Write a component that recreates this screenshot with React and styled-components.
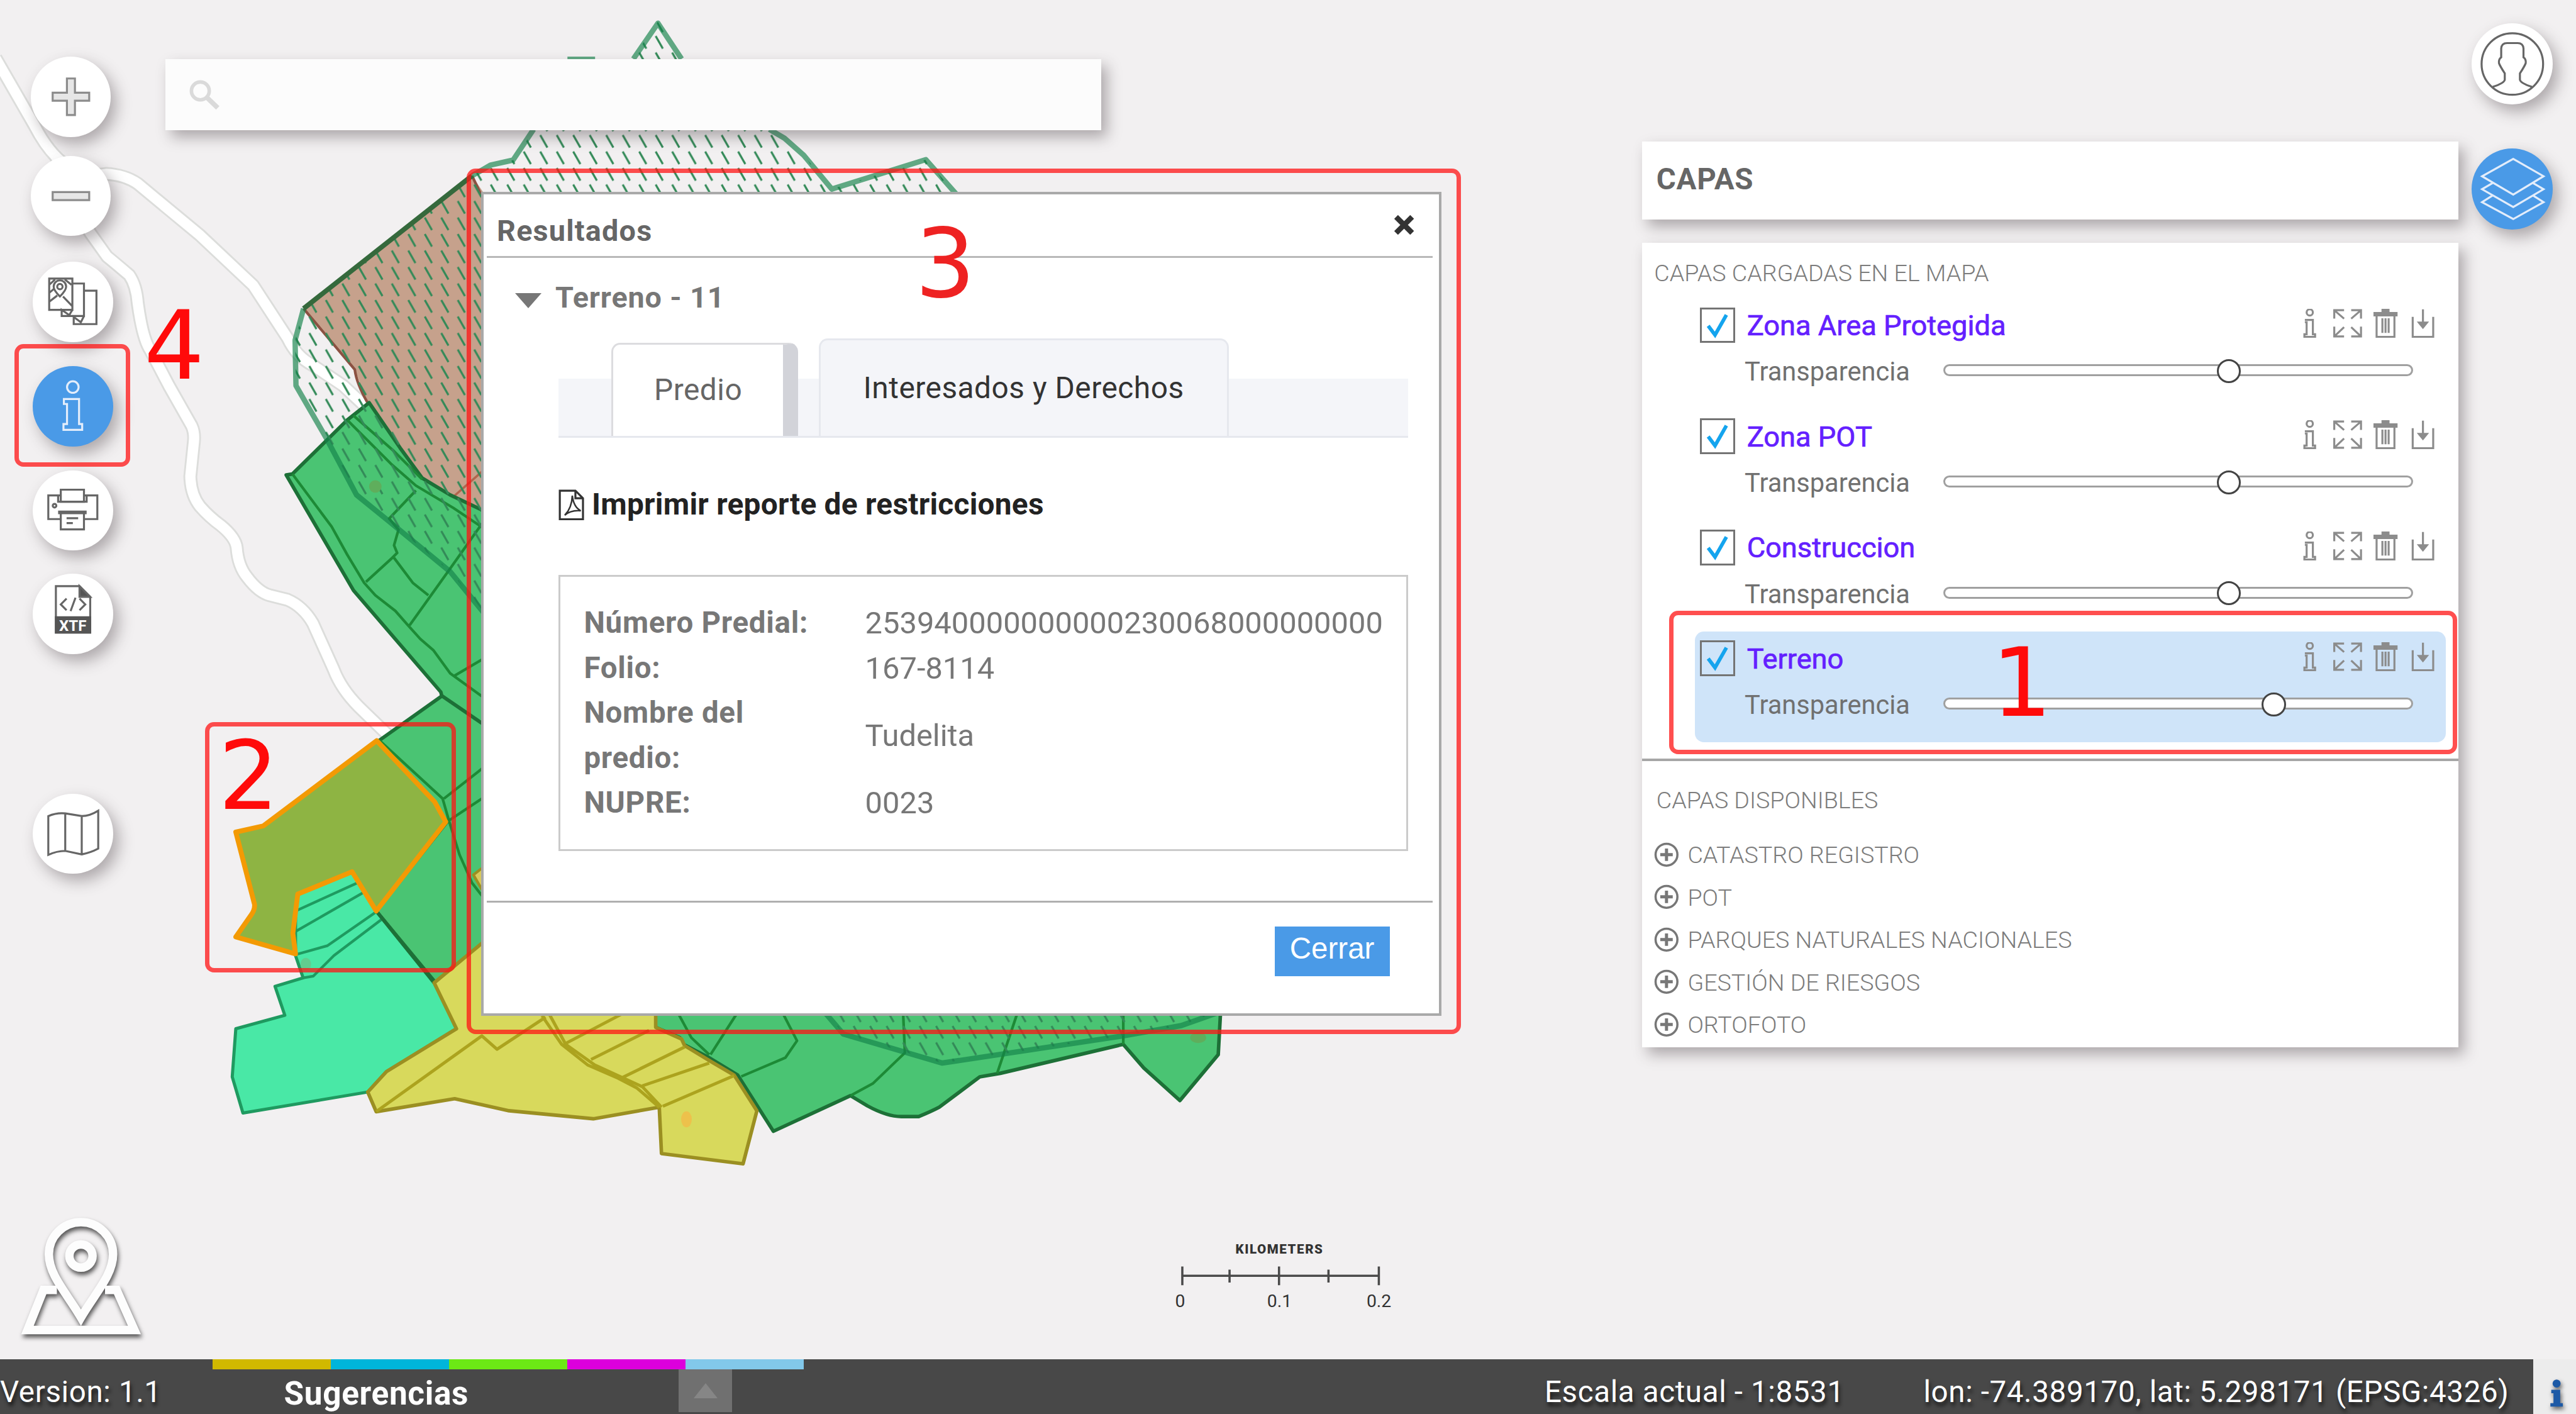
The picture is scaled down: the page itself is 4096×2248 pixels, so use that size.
import React from "react";
import styled, { createGlobalStyle, css } from "styled-components";

/* Design units: the layout is drawn on a 5779 x 3171 grid. */
const u = (n) => `${((n * 4096) / 5779).toFixed(2)}px`;

const GlobalStyle = createGlobalStyle`
  html, body { margin: 0; padding: 0; overflow: hidden; background: #f2f0f1; }
  * { box-sizing: border-box; }
`;

const Screen = styled.div`
  position: relative;
  display: flex;
  flex-direction: column;
  width: 4096px;
  height: 2248px;
  overflow: hidden;
  background: #f2f0f1;
  font-family: Roboto, "Liberation Sans", sans-serif;
`;

const MapArea = styled.main`
  position: relative;
  flex: 1;
`;

const MapSvg = styled.svg`
  position: absolute;
  left: 0;
  top: 0;
  width: 4096px;
  height: 2248px;
`;

/* ---------- floating buttons ---------- */
const Toolbar = styled.nav`
  position: absolute;
  left: ${u(69)};
  top: ${u(127)};
  display: flex;
  flex-direction: column;
`;

const RoundButton = styled.button`
  display: flex;
  align-items: center;
  justify-content: center;
  flex: none;
  width: ${(p) => u(p.$size || 180)};
  height: ${(p) => u(p.$size || 180)};
  margin: ${(p) => u(p.$gap || 0)} 0 0 ${(p) => u(p.$shift || 0)};
  padding: 0;
  border: 0;
  border-radius: 50%;
  background: ${(p) => (p.$active ? "#4a9ae7" : "#fff")};
  box-shadow: ${u(12)} ${u(16)} ${u(34)} rgba(60, 50, 55, 0.38);
  svg {
    width: ${u(180)};
    height: ${u(180)};
    fill: none;
    stroke: ${(p) => (p.$active ? "#e3edfb" : "#666")};
    stroke-width: 4.5;
  }
`;

const RightTools = styled.nav`
  position: absolute;
  left: ${u(5545)};
  top: ${u(52)};
  display: flex;
  flex-direction: column;
`;

const SearchBar = styled.div`
  position: absolute;
  left: ${u(371)};
  top: ${u(133)};
  width: ${u(2100)};
  height: ${u(159)};
  padding-left: ${u(50)};
  display: flex;
  align-items: center;
  background: #fcfcfc;
  box-shadow: ${u(12)} ${u(16)} ${u(30)} rgba(60, 50, 55, 0.38);
  svg {
    width: ${u(76)};
    height: ${u(76)};
    fill: none;
    stroke: #dadada;
  }
`;

/* ---------- results window ---------- */
const Dialog = styled.section`
  position: absolute;
  left: ${u(1079)};
  top: ${u(431)};
  width: ${u(2155)};
  height: ${u(1848)};
  border: ${u(6)} solid #a9a9a9;
  background: #fff;
  color: #777;
  font-size: ${u(66)};
  line-height: ${u(66)};
`;

const DialogHeader = styled.header`
  display: flex;
  justify-content: space-between;
  height: ${u(142)};
  margin: 0 ${u(14)} 0 ${u(8)};
  padding: ${u(49)} ${u(42)} 0 ${u(22)};
  border-bottom: ${u(5)} solid #b8b8b8;
  color: #666;
  font-weight: 700;
  letter-spacing: ${u(1.7)};
  svg {
    width: ${u(44)};
    height: ${u(44)};
    margin-top: ${u(-3)};
    stroke: #333;
    stroke-width: 12;
  }
`;

const ResultTitle = styled.div`
  display: flex;
  align-items: center;
  gap: ${u(31)};
  height: ${u(66)};
  margin: ${u(56)} 0 0 ${u(71)};
  font-weight: 700;
  letter-spacing: ${u(1.2)};
`;

const Caret = styled.i`
  margin-top: ${u(14)};
  border: solid transparent;
  border-width: ${u(35)} ${u(31)} 0;
  border-top-color: #777;
`;

const Tabs = styled.div`
  display: flex;
  align-items: flex-end;
  width: ${u(1907)};
  height: ${u(223)};
  margin: ${u(58)} 0 0 ${u(168)};
  padding-left: ${u(119)};
  background: linear-gradient(transparent ${u(91)}, #f4f5f9 ${u(91)});
  border-bottom: ${u(5)} solid #e6e8ee;
`;

const Tab = styled.button`
  width: ${(p) => u(p.$w)};
  height: ${(p) => u(p.$h)};
  margin-right: ${u(46)};
  padding: 0;
  border: ${u(5)} solid #e6e8ee;
  border-bottom: 0;
  border-radius: ${u(20)} ${u(20)} 0 0;
  background: #f4f5f9;
  color: #333;
  font: 400 ${u(67.5)} Roboto, sans-serif;
  letter-spacing: ${u(0.7)};
  ${(p) =>
    p.$active &&
    css`
      background: #fff;
      color: #666;
      border-color: #dcdcdf;
      border-right: ${u(34)} solid #d2d3d9;
    `}
`;

const PrintLink = styled.a`
  display: flex;
  align-items: center;
  gap: ${u(17)};
  height: ${u(70)};
  margin: ${u(116)} 0 0 ${u(168)};
  color: #222;
  font-size: ${u(67.5)};
  font-weight: 700;
  letter-spacing: ${u(0.35)};
  white-space: nowrap;
  svg {
    width: ${u(58)};
    height: ${u(70)};
    fill: none;
    stroke: #333;
    stroke-width: 4.5;
  }
`;

const Details = styled.dl`
  display: grid;
  grid-template-columns: ${u(560)} 1fr;
  column-gap: ${u(71)};
  align-items: center;
  align-content: start;
  width: ${u(1907)};
  height: ${u(619)};
  margin: ${u(122)} 0 0 ${u(168)};
  padding: ${u(54)} 0 0 ${u(53)};
  border: ${u(5)} solid #cbcbcb;
  font-size: ${u(68.9)};
  line-height: ${u(100.8)};
  dt { font-weight: 700; font-size: ${u(67)}; letter-spacing: ${u(1)}; }
  dd { margin: 0; }
`;

const DialogFooter = styled.footer`
  display: flex;
  justify-content: flex-end;
  margin: ${u(112)} ${u(14)} 0 ${u(8)};
  padding: ${u(53)} ${u(97)} 0 0;
  border-top: ${u(5)} solid #b0b0b0;
`;

const CloseButton = styled.button`
  width: ${u(258)};
  height: ${u(112)};
  padding: 0 0 ${u(14)};
  border: 0;
  background: #4a9ae7;
  color: #fff;
  font: ${u(67)} "Liberation Sans", sans-serif;
`;

/* ---------- layers panel ---------- */
const LayersPanel = styled.aside`
  position: absolute;
  left: ${u(3684)};
  top: ${u(317)};
  width: ${u(1831)};
  display: flex;
  flex-direction: column;
  gap: ${u(52)};
`;

const Card = styled.section`
  height: ${(p) => u(p.$h)};
  background: #fff;
  box-shadow: ${u(12)} ${u(16)} ${u(30)} rgba(60, 50, 55, 0.38);
`;

const PanelTitle = styled.h2`
  margin: 0;
  padding: ${u(52)} 0 0 ${u(32)};
  color: #666;
  font-size: ${u(67)};
  line-height: ${u(67)};
  font-weight: 700;
  letter-spacing: ${u(1)};
`;

const Heading = styled.h3`
  margin: 0;
  padding: ${(p) => u(p.$top)} 0 0 ${(p) => u(p.$left)};
  color: #7c7c7c;
  font-size: ${u(53.1)};
  line-height: ${u(58)};
  font-weight: 300;
  white-space: nowrap;
`;

const LoadedLayers = styled.div`
  padding-top: ${u(26.4)};
`;

const LayerRow = styled.div`
  height: ${u(249.2)};
  margin: 0 ${u(28)} 0 ${u(118)};
  padding: ${u(21)} ${u(25)} 0 ${u(11)};
  border-radius: ${u(20)};
  background: ${(p) => (p.$selected ? "#cfe4f9" : "transparent")};
`;

const RowTop = styled.div`
  display: flex;
  align-items: center;
  height: ${u(80)};
`;

const Checkbox = styled.span`
  display: flex;
  width: ${u(80)};
  height: ${u(80)};
  border: ${u(5)} solid #747474;
  background: ${(p) => (p.$selected ? "transparent" : "#fff")};
  svg {
    width: 100%;
    height: 100%;
    fill: none;
    stroke: #14a4ee;
    stroke-width: 8;
  }
`;

const LayerName = styled.span`
  flex: 1;
  margin: ${u(2)} 0 0 ${u(26)};
  color: #6420ff;
  font-size: ${u(63.8)};
  -webkit-text-stroke: ${u(1)} #6420ff;
  white-space: nowrap;
`;

const RowIcons = styled.svg`
  width: ${u(296)};
  height: ${u(65)};
  margin-top: ${u(-7)};
  fill: none;
  stroke: #8c8c8c;
  stroke-width: 4.5;
`;

const RowBottom = styled.label`
  display: flex;
  align-items: center;
  height: ${u(60)};
  margin-top: ${u(33)};
  padding-left: ${u(101)};
  color: #707070;
  font-size: ${u(58.7)};
`;

const RowLabel = styled.span`
  width: ${u(445)};
  padding-top: ${u(3)};
`;

const Track = styled.span`
  position: relative;
  width: ${u(1054)};
  height: ${u(27)};
  margin-top: ${u(-3)};
  border: ${u(5)} solid #a0a0a0;
  border-radius: ${u(14)};
  background: #fff;
`;

const Thumb = styled.span`
  position: absolute;
  top: ${u(-16)};
  left: ${(p) => u(p.$x)};
  width: ${u(54)};
  height: ${u(54)};
  border: ${u(5.5)} solid #444;
  border-radius: 50%;
  background: #fff;
`;

const Divider = styled.hr`
  height: ${u(6)};
  margin: ${u(36)} 0 0;
  border: 0;
  background: #a6a6a6;
`;

const GroupList = styled.ul`
  margin: ${u(44)} 0 0;
  padding: 0 0 0 ${u(26)};
  list-style: none;
`;

const Group = styled.li`
  display: flex;
  align-items: center;
  gap: ${u(20)};
  height: ${u(95.3)};
  color: #7c7c7c;
  font-size: ${u(53.1)};
  font-weight: 300;
  white-space: nowrap;
  span { padding-top: ${u(2)}; }
  svg {
    width: ${u(56)};
    height: ${u(56)};
    fill: none;
    stroke: #777;
    stroke-width: 5;
  }
`;

/* ---------- scale and logo ---------- */
const ScaleBar = styled.div`
  position: absolute;
  left: ${u(2536)};
  top: ${u(2779)};
  width: ${u(669)};
  color: #333;
  font-size: ${u(40)};
  svg {
    display: block;
    width: ${u(669)};
    height: ${u(46)};
    margin-top: ${u(14)};
    stroke: #4a4a4a;
    stroke-width: 5;
  }
`;

const ScaleUnit = styled.div`
  text-align: center;
  font-size: ${u(29)};
  line-height: ${u(46)};
  font-weight: 900;
  letter-spacing: ${u(2.2)};
`;

const ScaleMarks = styled.div`
  display: grid;
  grid-template-columns: repeat(3, 1fr);
  padding-top: ${u(10)};
  line-height: ${u(48)};
  text-align: center;
`;

const Logo = styled.svg`
  position: absolute;
  left: ${u(30)};
  top: ${u(2710)};
  width: ${u(310)};
  height: ${u(320)};
  fill: none;
  stroke: #fdfdfd;
  stroke-width: 19;
  filter: drop-shadow(${u(3)} ${u(8)} ${u(5)} rgba(0, 0, 0, 0.65));
`;

/* ---------- status bar ---------- */
const StatusBar = styled.footer`
  position: relative;
  display: flex;
  height: ${u(123)};
  background: #484848;
  color: #fff;
  font-size: ${u(67)};
  line-height: ${u(67)};
  letter-spacing: ${u(0.9)};
  white-space: nowrap;
`;

const StatusCell = styled.div`
  width: ${(p) => u(p.$w)};
  padding: ${(p) => u(p.$top)} 0 0;
  text-shadow: ${u(3)} ${u(9)} ${u(9)} rgba(0, 0, 0, 0.7);
`;

const Suggestions = styled(StatusCell)`
  font-size: ${u(72.5)};
  font-weight: 700;
  text-shadow: none;
`;

const Spacer = styled.div`
  flex: 1;
`;

const ColorStrip = styled.div`
  position: absolute;
  left: ${u(477)};
  top: 0;
  display: flex;
`;

const Swatch = styled.span`
  width: ${u(265.2)};
  height: ${u(23)};
  background: ${(p) => p.$color};
`;

const Expander = styled.div`
  display: flex;
  align-items: center;
  justify-content: center;
  width: ${u(121)};
  height: ${u(96)};
  margin-top: ${u(23)};
  background: #707070;
  i {
    border: solid transparent;
    border-width: 0 ${u(27)} ${u(35)};
    border-bottom-color: #868686;
  }
`;

const InfoCorner = styled.div`
  width: ${u(96)};
  background: #ececec;
  svg {
    width: ${u(40)};
    height: ${u(70)};
    margin: ${u(42)} 0 0 ${u(33)};
    fill: #1d5aa6;
    filter: drop-shadow(${u(3)} ${u(6)} ${u(5)} rgba(0, 0, 0, 0.6));
  }
`;

/* ---------- numbered callouts ---------- */
const Callout = styled.div`
  position: absolute;
  left: ${(p) => u(p.$x)};
  top: ${(p) => u(p.$y)};
  width: ${(p) => u(p.$w)};
  height: ${(p) => u(p.$h)};
  border: ${u(10)} solid rgba(255, 20, 20, 0.75);
  border-radius: ${u(20)};
`;

const CalloutNumber = styled.span`
  position: absolute;
  left: ${(p) => u(p.$x)};
  top: ${(p) => u(p.$base - 194)};
  color: ${(p) => p.$color || "#ff0a0a"};
  font: ${u(213)} / ${u(248)} "DejaVu Sans", sans-serif;
`;

const layers = [
  { name: "Zona Area Protegida", x: 610 },
  { name: "Zona POT", x: 610 },
  { name: "Construccion", x: 610 },
  { name: "Terreno", x: 711, selected: true },
];

const groups = [
  "CATASTRO REGISTRO",
  "POT",
  "PARQUES NATURALES NACIONALES",
  "GESTIÓN DE RIESGOS",
  "ORTOFOTO",
];

const roads = [
  "M-10 130 L77 281 Q110 345 150 372 T238 390 Q280 392 309 412 L449 528 L568 640 L645 758 Q665 800 700 818 L770 865 L850 940",
  "M126 351 Q150 440 203 523 L240 575 Q262 593 290 617 Q306 640 309 680 Q320 760 337 785 L379 865 L430 955 Q437 970 435 990 L427 1068 Q428 1110 449 1136 Q470 1160 495 1178 Q528 1205 531 1228 Q534 1270 555 1295 Q580 1328 605 1335 L645 1345 Q680 1360 702 1398 L748 1500 Q765 1545 805 1585 L870 1648",
];

const Map = () => (
  <MapSvg viewBox="0 0 5779 3171" preserveAspectRatio="none">
    <defs>
      <pattern id="hatch" patternUnits="userSpaceOnUse" x="988" y="485" width="37" height="37">
        <path d="M2 3 L18 31" stroke="#338a58" strokeWidth="4.5" fill="none" />
      </pattern>
    </defs>
    <g fill="none" strokeLinejoin="round">
      {roads.map((d) => (
        <path key={d} d={d} stroke="#dcdddb" strokeWidth="31" />
      ))}
      {roads.map((d) => (
        <path key={d + "f"} d={d} stroke="#fff" strokeWidth="23" />
      ))}
    </g>
    <g strokeLinejoin="round">
      <path fill="#c6a18c" stroke="none" d="M1059 394 L681 692 L796 829 L824 902 L898 1005 L947 1072 L1010 1110 L1090 1170 V440Z" />
      <path fill="none" stroke="#8c5142" strokeWidth="6" d="M1090 460 L1059 394 M681 692 L796 829 Q800 860 824 902" />
      <path fill="none" stroke="#b3654d" strokeWidth="5" d="M1017 1114 L1090 1050" />
      <path
        fill="#4ac473"
        stroke="#1d7037"
        strokeWidth="8"
        d="M828 903 L779 942 L656 1063 L642 1065 L793 1324 L989 1552 L991 1561 L850 1661 L1003 1843 L844 2043 L974 2200 L1400 2279 L1471 2304 L1525 2327 L1533 2342 L1591 2372 L1655 2411 L1735 2537 L1908 2457 L1946 2480 Q1990 2504 2022 2504 H2061 Q2090 2492 2107 2483 L2198 2415 L2244 2407 L2520 2342 L2566 2395 L2647 2468 L2733 2365 L2742 2200 L1200 1200 L1010 1110 L947 1072 L898 1005Z"
      />
      <path
        fill="none"
        stroke="#1d8a36"
        strokeWidth="6"
        d="M779 942 L877 1040 L933 1089 L1017 1139 L1090 1188 M793 932 L884 1012 L947 1075 M656 1063 L744 1181 L779 1244 L817 1307 L842 1335 L887 1370 L915 1402 L943 1433 L972 1458 L1010 1510 L1090 1568 M933 1100 L873 1163 L894 1188 L884 1223 L891 1240 L880 1251 L821 1305 M884 1251 L926 1307 L961 1335 M1090 1162 L1007 1279 L919 1402 M1017 1517 L1090 1474 M852 1661 L993 1791 L1007 1840 L1031 1917 L1059 1980 L1090 2020 M996 1791 L1090 1717 M1007 1840 L1090 1785 M1520 2270 L1551 2327 L1591 2365 M1655 2270 L1594 2365 M1755 2270 L1788 2334 L1762 2372 L1663 2414 M2026 2270 L2030 2361 L1958 2430 L1908 2457 M2283 2270 L2237 2407 M2520 2270 V2342"
      />
      <path fill="none" stroke="#1d7037" strokeWidth="8" d="M989 1559 L1090 1628" />
      <path
        fill="url(#hatch)"
        stroke="none"
        d="M1476 48 L1529 128 L1726 293 L1803 348 L1866 424 L2077 358 L2140 429 V470 H1085 V1372 L1010 1282 L870 1167 L800 1110 L730 979 L664 865 L662 763 L681 692 L1059 392 L1151 359 L1197 293 L1421 128Z"
      />
      <path fill="url(#hatch)" stroke="none" d="M1854 2270 L1892 2319 L2114 2384 L2520 2323 L2650 2300 L2727 2270Z" />
      <g fill="none" stroke="#14824a" strokeOpacity="0.66" strokeWidth="12">
        <path d="M1421 132 L1476 52 L1529 132 M1273 133 H1335 M1197 290 L1151 359 L1101 370 L1059 394" />
        <path d="M1726 290 L1760 310 L1803 348 L1866 424 L2077 358 L2145 435" />
        <path d="M681 692 L662 763 L664 865 L730 979 L800 1110 L870 1167 L1010 1282 L1090 1380" />
        <path d="M1850 2270 L1892 2319 L2114 2384 L2520 2323 L2650 2300 L2735 2270" />
      </g>
      <path fill="none" stroke="#35693c" strokeWidth="11" d="M1059 394 L681 692" />
      <path
        fill="#49e8a6"
        stroke="#1f9a60"
        strokeWidth="7"
        d="M663 2001 L790 1955 L844 2043 L974 2204 L1024 2307 L867 2403 L825 2449 L545 2496 L521 2415 L529 2307 L639 2277 L617 2212 L680 2193 L663 2143Z"
      />
      <path
        fill="none"
        stroke="#1f9a60"
        strokeWidth="6"
        d="M663 2043 L806 1978 M663 2089 L816 2001 M663 2141 L734 2121 L847 2043 M680 2193 L703 2189 L749 2143 L856 2062"
      />
      <path fill="none" stroke="#1d7037" strokeWidth="8" d="M844 2043 L974 2204" />
      <path
        fill="#d8d95c"
        stroke="#9b8f22"
        strokeWidth="8"
        d="M1090 2108 L974 2204 L1024 2307 L867 2403 L825 2449 L844 2493 L1020 2464 L1142 2491 L1331 2509 L1479 2483 L1484 2587 L1667 2610 L1698 2491 L1647 2411 L1594 2380 L1536 2345 L1529 2330 L1471 2304 V2270Z"
      />
      <path
        fill="none"
        stroke="#aca31e"
        strokeWidth="7"
        d="M844 2493 L1081 2323 L1115 2353 L1224 2281 M1230 2270 L1269 2342 L1334 2388 L1441 2437 L1484 2483 M1216 2278 L1260 2342 L1318 2388 L1387 2418 L1429 2440 L1479 2483 M1269 2340 L1395 2274 M1326 2376 L1456 2311 M1395 2417 L1536 2348 M1441 2435 L1591 2384 M1487 2481 L1647 2412"
      />
      <path fill="#d8c95c" stroke="#9b8f22" strokeWidth="6" d="M1090 1940 L1062 1962 L1090 2010" />
      <path
        fill="#8eb443"
        stroke="#f39a04"
        strokeWidth="11"
        d="M845 1661 L975 1798 L1000 1843 L844 2043 L790 1955 L668 2005 L657 2093 L663 2139 L529 2101 L564 2051 Q572 2040 571 2028 L529 1866 L591 1852Z"
      />
      <g stroke="none">
        <circle cx="842" cy="1091" r="14" fill="#5fae5c" />
        <ellipse cx="2688" cy="2327" rx="18" ry="12" fill="#5fae5c" />
        <ellipse cx="1540" cy="2510" rx="12" ry="18" fill="#edc14b" />
        <ellipse cx="686" cy="2162" rx="12" ry="14" fill="#62cd8f" />
      </g>
    </g>
  </MapSvg>
);

const Icon = ({ children }) => <svg viewBox="-90 -90 180 180">{children}</svg>;

const info = "M-20 -16 H14 V40 H21 V53 H-21 V40 H-13 V-5 H-20Z";

export default function App() {
  return (
    <>
      <GlobalStyle />
      <Screen>
        <MapArea>
          <Map />
          <Toolbar>
            <RoundButton>
              <Icon>
                <path d="M-9 -41 H9 V-9 H41 V9 H9 V41 H-9 V9 H-41 V-9 H-9Z" fill="#e6e6e6" stroke="#8c8c8c" />
              </Icon>
            </RoundButton>
            <RoundButton $gap={42.5}>
              <Icon>
                <path d="M-41 -9 H41 V9 H-41Z" fill="#e6e6e6" stroke="#8c8c8c" />
              </Icon>
            </RoundButton>
            <RoundButton $gap={58} $shift={5}>
              <Icon>
                <path d="M-53 -52 H-1 V18 H-53Z M-53 -20 L-41 -30 M-1 10 L-22 -12 M-53 0 L-35 -14 M-40 -50 L-53 -38 M-18 -50 L-3 -38" />
                <path d="M-29 -12 Q-43 -26 -43 -34 A14 14 0 0 1 -15 -34 Q-15 -26 -29 -12Z" />
                <circle cx="-29" cy="-34" r="6" />
                <path d="M-1 -41 H25 V32 H-25 V18 L-8 30 L-1 18" />
                <path d="M25 -25 H53 V50 H2 V34 L18 46 L25 32" />
              </Icon>
            </RoundButton>
            <RoundButton $gap={54} $shift={5} $active>
              <Icon>
                <circle cx="0" cy="-43" r="13" />
                <path d={info} />
              </Icon>
            </RoundButton>
            <RoundButton $gap={53.5} $shift={5}>
              <Icon>
                <path d="M-27 -34 H-55 V19 H-27 M25 19 H55 V-34 H25" />
                <path d="M-27 -47 H25 V-20 H-27Z" />
                <path d="M-33 -34 V-20 H31 V-34" />
                <path d="M-27 4 H25 V42 H-27Z" />
                <path d="M-33 4 H31" strokeWidth="8" />
                <path d="M-14 17 H12 M-14 28 H0" />
                <circle cx="-41" cy="-11" r="4" />
              </Icon>
            </RoundButton>
            <RoundButton $gap={52.5} $shift={5}>
              <Icon>
                <path d="M-38 -62 H15 L39 -38 V42 H-38Z" />
                <path d="M15 -62 V-38 H39Z" fill="#555" />
                <path d="M-38 8 H39 V42 H-38Z" fill="#555" stroke="#555" />
                <path d="M-14 -34 L-27 -21 L-14 -8 M15 -34 L28 -21 L15 -8 M6 -36 L-5 -6" />
                <text x="0" y="38" textAnchor="middle" fontFamily="Roboto, sans-serif" fontWeight="700" fontSize="34" fill="#fff" stroke="none">
                  XTF
                </text>
              </Icon>
            </RoundButton>
            <RoundButton $gap={313} $shift={5}>
              <Icon>
                <path d="M-55 -40 Q-36 -48 -17 -46 L20 -40 Q38 -40 57 -52 V33 Q40 42 20 46 L-17 38 Q-36 38 -55 47Z M-17 -46 V38 M20 -40 V46" />
              </Icon>
            </RoundButton>
          </Toolbar>

          <SearchBar>
            <svg viewBox="0 0 76 76">
              <circle cx="29" cy="29" r="20" strokeWidth="8" />
              <path d="M43 43 L68 67" strokeWidth="11" />
            </svg>
          </SearchBar>

          <Dialog>
            <DialogHeader>
              <span>Resultados</span>
              <svg viewBox="0 0 44 44">
                <path d="M4 4 L40 40 M40 4 L4 40" />
              </svg>
            </DialogHeader>
            <ResultTitle>
              <Caret />
              Terreno - 11
            </ResultTitle>
            <Tabs>
              <Tab $w={419} $h={209} $active>
                Predio
              </Tab>
              <Tab $w={920} $h={219}>
                Interesados y Derechos
              </Tab>
            </Tabs>
            <PrintLink>
              <svg viewBox="0 0 58 70">
                <path d="M3 3 H38 L55 20 V67 H3Z M38 3 V20 H55" />
                <path d="M14 58 Q30 42 31 14 Q34 40 50 48 Q28 46 14 58Z" strokeWidth="3.5" />
              </svg>
              Imprimir reporte de restricciones
            </PrintLink>
            <Details>
              <dt>Número Predial:</dt>
              <dd>253940000000000230068000000000</dd>
              <dt>Folio:</dt>
              <dd>167-8114</dd>
              <dt>Nombre del predio:</dt>
              <dd>Tudelita</dd>
              <dt>NUPRE:</dt>
              <dd>0023</dd>
            </Details>
            <DialogFooter>
              <CloseButton>Cerrar</CloseButton>
            </DialogFooter>
          </Dialog>

          <LayersPanel>
            <Card $h={176}>
              <PanelTitle>CAPAS</PanelTitle>
            </Card>
            <Card $h={1804}>
              <Heading $top={39} $left={27}>
                CAPAS CARGADAS EN EL MAPA
              </Heading>
              <LoadedLayers>
                {layers.map((l) => (
                  <LayerRow key={l.name} $selected={l.selected}>
                    <RowTop>
                      <Checkbox $selected={l.selected}>
                        <svg viewBox="0 0 70 70">
                          <path d="M14 36 L29 56 L54 12" />
                        </svg>
                      </Checkbox>
                      <LayerName>{l.name}</LayerName>
                      <RowIcons viewBox="0 0 296 65">
                        <circle cx="15" cy="8" r="7" />
                        <path d="M4 25 H22 V57 H27 V63 H3 V57 H8 V30 H4" />
                        <path d="M70 22 V3 H92 M70 3 L92 22 M108 3 H130 V22 M130 3 L108 22 M70 40 V62 H92 M70 62 L92 41 M108 62 H130 V40 M130 62 L108 41" />
                        <path d="M158 12 H212" strokeWidth="10" />
                        <path d="M176 4 H194" strokeWidth="8" />
                        <path d="M165 17 V63 H205 V17 M178 21 V54 M185 21 V54 M192 21 V54" />
                        <path d="M246 18 V63 H292 V18 M269 1 V38" />
                        <path d="M260 31 L269 42 L278 31Z" fill="#8c8c8c" />
                      </RowIcons>
                    </RowTop>
                    <RowBottom>
                      <RowLabel>Transparencia</RowLabel>
                      <Track>
                        <Thumb $x={l.x} />
                      </Track>
                    </RowBottom>
                  </LayerRow>
                ))}
              </LoadedLayers>
              <Divider />
              <Heading $top={60} $left={32}>
                CAPAS DISPONIBLES
              </Heading>
              <GroupList>
                {groups.map((g) => (
                  <Group key={g}>
                    <svg viewBox="0 0 56 56">
                      <circle cx="28" cy="28" r="24.5" />
                      <path d="M28 14 V42 M14 28 H42" strokeWidth="7" />
                    </svg>
                    <span>{g}</span>
                  </Group>
                ))}
              </GroupList>
            </Card>
          </LayersPanel>

          <RightTools>
            <RoundButton $size={182}>
              <Icon>
                <circle r="69" />
                <path d="M-44 51 Q-18 43 -17 35 V21 Q-28 4 -30 -2 Q-31 -11 -25 -15 V-35 Q-24 -47 -12 -47 H12 Q24 -47 25 -35 V-15 Q31 -11 30 -2 Q28 4 17 21 V35 Q18 43 44 51" />
              </Icon>
            </RoundButton>
            <RoundButton $size={182} $gap={99} $active>
              <Icon>
                <path d="M2 -68 L70 -29 L2 12 L-68 -29Z M-44 -14 L-68 0 L2 40 L70 0 L46 -14 M-44 14 L-68 29 L2 67 L70 29 L46 14" />
              </Icon>
            </RoundButton>
          </RightTools>

          <ScaleBar>
            <ScaleUnit>KILOMETERS</ScaleUnit>
            <svg viewBox="2536 0 669 46">
              <path d="M2653 23 H3096 M2653 2 V44 M2759 9 V38 M2870 2 V44 M2981 9 V38 M3094 2 V44" />
            </svg>
            <ScaleMarks>
              <span>0</span>
              <span>0.1</span>
              <span>0.2</span>
            </ScaleMarks>
          </ScaleBar>

          <Logo viewBox="30 2710 310 320">
            <path d="M182 2955 C150 2900 110 2860 110 2813 A72 72 0 0 1 254 2813 C254 2860 214 2900 182 2955Z" />
            <circle cx="182" cy="2817" r="26" />
            <path d="M128 2893 H98 L62 2983 H302 L262 2893 H236" />
          </Logo>
        </MapArea>

        <StatusBar>
          <StatusCell $w={637} $top={41}>
            Version: 1.1
          </StatusCell>
          <Suggestions $w={885} $top={44}>
            Sugerencias
          </Suggestions>
          <Expander>
            <i />
          </Expander>
          <Spacer />
          <StatusCell $w={850} $top={41}>
            Escala actual - 1:8531
          </StatusCell>
          <StatusCell $w={1368} $top={41}>
            lon: -74.389170, lat: 5.298171 (EPSG:4326)
          </StatusCell>
          <InfoCorner>
            <svg viewBox="0 0 40 70">
              <circle cx="20" cy="12" r="9" />
              <path d="M8 26 H28 V56 H34 V64 H6 V56 H13 V34 H8Z" />
            </svg>
          </InfoCorner>
          <ColorStrip>
            {["#d1b900", "#00b5da", "#6ce815", "#dc00dc", "#82c8ea"].map((c) => (
              <Swatch key={c} $color={c} />
            ))}
          </ColorStrip>
        </StatusBar>

        <Callout $x={33} $y={772} $w={259} $h={275} />
        <Callout $x={460} $y={1619} $w={563} $h={562} />
        <Callout $x={1047} $y={378} $w={2231} $h={1942} />
        <Callout $x={3744} $y={1370} $w={1768} $h={321} />
        <CalloutNumber $x={4468} $base={1603}>1</CalloutNumber>
        <CalloutNumber $x={490} $base={1812}>2</CalloutNumber>
        <CalloutNumber $x={2053} $base={664} $color="#ee2222">3</CalloutNumber>
        <CalloutNumber $x={323} $base={847}>4</CalloutNumber>
      </Screen>
    </>
  );
}
